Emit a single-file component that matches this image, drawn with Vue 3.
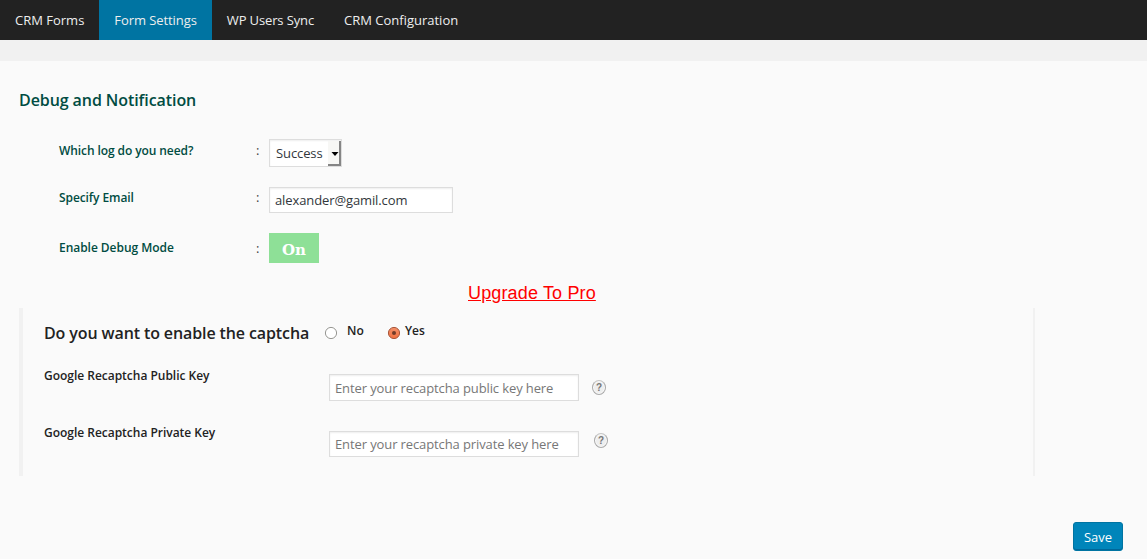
<script setup>
import { ref } from 'vue'

const tabs = ['CRM Forms', 'Form Settings', 'WP Users Sync', 'CRM Configuration']
const activeTab = ref('Form Settings')
const email = ref('alexander@gamil.com')
const captcha = ref(true)
const publicKey = ref('')
const privateKey = ref('')
</script>

<template>
  <div class="page">
    <nav class="tabs">
      <a v-for="tab in tabs" :key="tab" class="tab" :class="{ active: tab === activeTab }" @click="activeTab = tab">{{ tab }}</a>
    </nav>
    <main class="content">
      <h2 class="title">Debug and Notification</h2>
      <section class="settings">
        <div class="row row-log">
          <span class="label">Which log do you need?</span><span class="colon">:</span>
          <div class="select">
            <span class="select-text">Success</span>
            <span class="select-button"><svg width="8" height="4" viewBox="0 0 8 4"><path d="M0.5 0h7L4 4z" fill="#000" /></svg></span>
          </div>
        </div>
        <div class="row row-email">
          <span class="label">Specify Email</span><span class="colon">:</span>
          <input v-model="email" class="field email" type="text" />
        </div>
        <div class="row row-debug">
          <span class="label">Enable Debug Mode</span><span class="colon">:</span>
          <span class="toggle">On</span>
        </div>
      </section>
      <div class="upgrade"><a>Upgrade To Pro</a></div>
      <section class="captcha">
        <div class="question">
          <h3>Do you want to enable the captcha</h3>
          <span class="radio no" @click="captcha = false">
            <svg width="14" height="14" viewBox="0 0 14 14"><circle cx="7" cy="7" r="5.6" fill="#fff" stroke="#979793" /></svg>
          </span>
          <span class="option opt-no">No</span>
          <span class="radio yes" @click="captcha = true">
            <svg width="14" height="14" viewBox="0 0 14 14">
              <defs><linearGradient id="orange" x2="0" y2="1"><stop stop-color="#f39069" /><stop offset="1" stop-color="#f0703f" /></linearGradient></defs>
              <circle cx="7" cy="7" r="5.6" fill="url(#orange)" stroke="#a8573b" />
              <circle cx="7" cy="7" r="2" fill="#713b29" />
            </svg>
          </span>
          <span class="option opt-yes">Yes</span>
        </div>
        <div class="key-row public">
          <span class="key-label">Google Recaptcha Public Key</span>
          <input v-model="publicKey" class="field" type="text" placeholder="Enter your recaptcha public key here" />
          <span class="help"><i>?</i></span>
        </div>
        <div class="key-row private">
          <span class="key-label">Google Recaptcha Private Key</span>
          <input v-model="privateKey" class="field" type="text" placeholder="Enter your recaptcha private key here" />
          <span class="help"><i>?</i></span>
        </div>
      </section>
      <div class="actions"><button class="save">Save</button></div>
    </main>
  </div>
</template>

<style>
body { background: #f1f1f1; overflow: hidden; }
</style>

<style scoped>
.page { height: 559px; font: 13px/20px "Open Sans", "Noto Sans", sans-serif; color: #444; }
.page * { box-sizing: border-box; }
.tabs { display: flex; height: 40px; background: #222; margin-bottom: 21px; }
.tab { height: 40px; padding: 0 15px; line-height: 40px; color: #eee; white-space: nowrap; cursor: pointer; }
.tab:nth-child(2) { letter-spacing: -.08px; }
.tab:nth-child(3) { letter-spacing: -.13px; }
.tab.active { background: #0074a2; }
.content { height: 498px; background: #fafafa; padding: 29px 24px 0 19px; }
.title { margin: 0; font-size: 16px; line-height: 20px; font-weight: 600; color: #004c42; letter-spacing: -.08px; }
.settings { padding: 29px 0 0 40px; }
.row { display: flex; align-items: flex-start; }
.row-log { height: 48px; }
.row-email { height: 46px; }
.row-debug { height: 30px; }
.label { width: 197px; font-size: 12px; font-weight: 600; color: #004c42; margin-top: 1px; letter-spacing: -.09px; }
.row-debug .label { letter-spacing: -.04px; }
.colon { width: 13px; }
.row-log .label { margin-top: 2px; }
.row-log .colon { margin-top: 1px; }
.row-debug .label, .row-debug .colon { margin-top: 5px; }
.field { display: block; margin: 0; padding: 0 5px; border: 1px solid #ddd; background: #fff; box-shadow: inset 0 1px 2px rgba(0, 0, 0, .07); color: #32373c; font: 13px "Open Sans", "Noto Sans", sans-serif; letter-spacing: -.11px; outline: none; }
.field::placeholder { color: #777; opacity: 1; }
.email { width: 184px; height: 26px; }
.select { display: flex; width: 73px; height: 28px; border: 1px solid #ddd; background: #fff; box-shadow: inset 0 1px 2px rgba(0, 0, 0, .07); color: #32373c; }
.select-text { width: 58px; padding-left: 6px; line-height: 27px; letter-spacing: -.1px; }
.select-button { display: flex; width: 13px; height: 25px; margin-top: 1px; padding: 11px 0 0 3px; background: #f7f7f5; border-right: 2px solid #858585; border-bottom: 2px solid #858585; }
.select-button svg { flex: none; }
.toggle { width: 50px; height: 30px; background: #8ee097; color: #fff; text-align: center; font: bold 15px/34px "DejaVu Serif", serif; }
.upgrade { height: 45px; padding: 20px 0 0 449px; font: 18px/20px "Liberation Sans", Arial, sans-serif; letter-spacing: .15px; color: #f00; }
.upgrade a { text-decoration: underline; }
.captcha { width: 1016px; height: 168px; padding-left: 21px; border-left: 4px solid #f1f1f1; border-right: 2px solid #f1f1f1; color: #222; }
.question { display: flex; height: 57px; padding-top: 15px; }
.question h3 { width: 280px; margin: 0; font-size: 16px; line-height: 20px; font-weight: 600; letter-spacing: -.11px; white-space: nowrap; }
.radio { width: 14px; height: 14px; margin-top: 3px; }
.radio svg { display: block; }
.option { font-size: 12px; font-weight: 600; margin-top: -2px; }
.opt-no { width: 40px; margin-left: 9px; }
.opt-yes { margin-left: 4px; }
.key-row { display: flex; height: 57px; }
.key-label { width: 285px; font-size: 12px; font-weight: 600; margin-top: 1px; letter-spacing: -.02px; }
.key-row .field { width: 250px; height: 27px; margin-top: 9px; }
.private .field { height: 26px; }
.help { display: flex; align-items: center; justify-content: center; width: 14px; height: 15px; margin: 15px 0 0 13px; border: 1px solid #aaa; border-top-color: #c5c5c5; border-radius: 50%; background: #eee; box-shadow: inset 0 0 0 1px #fafafa; }
.private .help { margin: 11px 0 0 15px; }
.help i { font: bold 10px/11px "Liberation Sans", Arial, sans-serif; color: #777; }
.actions { display: flex; justify-content: flex-end; padding-top: 46px; }
.save { width: 50px; height: 29px; padding: 0; border: 1px solid #0074a2; border-radius: 3px; background: #0085ba; box-shadow: inset 0 -1px 0 #006799; color: #fff; font: 13px/26px "Open Sans", "Noto Sans", sans-serif; }
</style>
